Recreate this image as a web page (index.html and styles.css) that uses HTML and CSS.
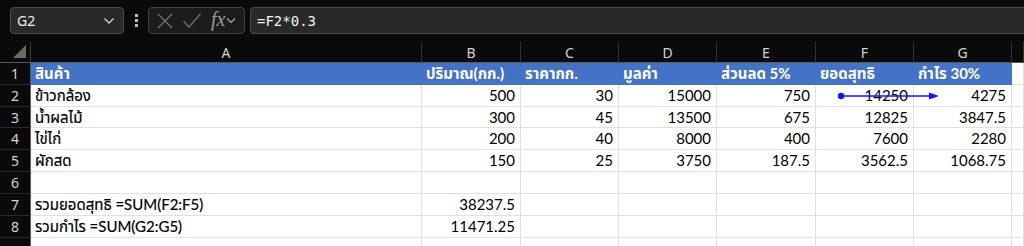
FILE: index.html
```html
<!DOCTYPE html>
<html lang="th">
<head>
<meta charset="utf-8">
<title>Sheet</title>
<link rel="stylesheet" href="styles.css">
</head>
<body>
<div class="toolbar">
  <div class="namebox">
    <span class="name">G2</span>
    <svg class="chev" width="12" height="8" viewBox="0 0 12 8"><polyline points="1.5,1.5 6,6 10.5,1.5" fill="none" stroke="#cfcfcf" stroke-width="1.4"/></svg>
  </div>
  <div class="dots"><i></i><i></i><i></i></div>
  <div class="btns">
    <svg class="ic" width="18" height="18" viewBox="0 0 18 18"><line x1="2" y1="2" x2="16" y2="16" stroke="#6e6e6e" stroke-width="1.4"/><line x1="16" y1="2" x2="2" y2="16" stroke="#6e6e6e" stroke-width="1.4"/></svg>
    <svg class="ic" width="20" height="18" viewBox="0 0 20 18"><polyline points="1.5,9 7,15 18.5,2" fill="none" stroke="#6e6e6e" stroke-width="1.4"/></svg>
    <span class="fx">fx</span>
    <svg class="chev2" width="10" height="7" viewBox="0 0 10 7"><polyline points="1,1.5 5,5.5 9,1.5" fill="none" stroke="#a8a8a8" stroke-width="1.2"/></svg>
  </div>
  <div class="formula">=F2*0.3</div>
</div>

<div class="sheet">
  <div class="corner"><span class="tri"></span></div>
  <div class="ch">A</div><div class="ch">B</div><div class="ch">C</div><div class="ch">D</div><div class="ch">E</div><div class="ch">F</div><div class="ch">G</div><div class="ch last"></div>

  <div class="rh">1</div>
  <div class="c hd">สินค้า</div><div class="c hd">ปริมาณ(กก.)</div><div class="c hd">ราคากก.</div><div class="c hd">มูลค่า</div><div class="c hd">ส่วนลด 5%</div><div class="c hd">ยอดสุทธิ</div><div class="c hd">กำไร 30%</div><div class="c"></div>

  <div class="rh">2</div>
  <div class="c">ข้าวกล้อง</div><div class="c n">500</div><div class="c n">30</div><div class="c n">15000</div><div class="c n">750</div><div class="c n">14250</div><div class="c n">4275</div><div class="c"></div>

  <div class="rh">3</div>
  <div class="c">น้ำผลไม้</div><div class="c n">300</div><div class="c n">45</div><div class="c n">13500</div><div class="c n">675</div><div class="c n">12825</div><div class="c n">3847.5</div><div class="c"></div>

  <div class="rh">4</div>
  <div class="c">ไข่ไก่</div><div class="c n">200</div><div class="c n">40</div><div class="c n">8000</div><div class="c n">400</div><div class="c n">7600</div><div class="c n">2280</div><div class="c"></div>

  <div class="rh">5</div>
  <div class="c">ผักสด</div><div class="c n">150</div><div class="c n">25</div><div class="c n">3750</div><div class="c n">187.5</div><div class="c n">3562.5</div><div class="c n">1068.75</div><div class="c"></div>

  <div class="rh">6</div>
  <div class="c"></div><div class="c"></div><div class="c"></div><div class="c"></div><div class="c"></div><div class="c"></div><div class="c"></div><div class="c"></div>

  <div class="rh">7</div>
  <div class="c">รวมยอดสุทธิ =SUM(F2:F5)</div><div class="c n">38237.5</div><div class="c"></div><div class="c"></div><div class="c"></div><div class="c"></div><div class="c"></div><div class="c"></div>

  <div class="rh">8</div>
  <div class="c">รวมกำไร =SUM(G2:G5)</div><div class="c n">11471.25</div><div class="c"></div><div class="c"></div><div class="c"></div><div class="c"></div><div class="c"></div><div class="c"></div>

  <div class="rh"></div>
  <div class="c"></div><div class="c"></div><div class="c"></div><div class="c"></div><div class="c"></div><div class="c"></div><div class="c"></div><div class="c"></div>

  <svg class="trace" width="110" height="12" viewBox="0 0 110 12">
    <circle cx="4" cy="6" r="3.2" fill="#1414ff"/>
    <line x1="4" y1="6" x2="96" y2="6" stroke="#1414ff" stroke-width="1.3"/>
    <polygon points="92,2.5 102,6 92,9.5" fill="#1414ff"/>
  </svg>
</div>
</body>
</html>
```
FILE: styles.css
```css
* { box-sizing: border-box; }
html, body {
  margin: 0;
  padding: 0;
  background: #0a0a0a;
  width: 1024px;
  height: 246px;
  overflow: hidden;
}
body {
  font-family: Lato, "Noto Sans", "Noto Sans Thai", sans-serif;
}
.toolbar {
  display: flex;
  align-items: center;
  height: 42px;
  padding: 7px 0 8px 10px;
}
.namebox {
  width: 114px;
  height: 27px;
  background: #292929;
  border: 1px solid #4c4c4c;
  border-radius: 4px;
  display: flex;
  align-items: center;
  justify-content: space-between;
  padding: 0 8px 0 6px;
}
.name {
  color: #f0f0f0;
  font-family: "Noto Sans", sans-serif;
  font-size: 14px;
}
.chev { display: block; }
.dots {
  width: 24px;
  display: flex;
  flex-direction: column;
  align-items: center;
  gap: 2px;
}
.dots i {
  display: block;
  width: 3px;
  height: 3px;
  background: #bdbdbd;
}
.btns {
  width: 97px;
  height: 27px;
  border: 1px solid #3f3f3f;
  border-radius: 4px;
  background: #1c1c1c;
  display: flex;
  align-items: center;
  padding: 0 3px 0 7px;
  gap: 8px;
}
.ic { display: block; flex: none; }
.fx {
  font-family: "Liberation Serif", serif;
  font-style: italic;
  font-size: 20px;
  color: #9a9a9a;
  margin-left: 1px;
  line-height: 1;
  margin-top: -3px;
}
.chev2 { display: block; margin-left: -7px; }
.formula {
  flex: 1;
  margin-left: 5px;
  height: 27px;
  background: #292929;
  border: 1px solid #4a4a4a;
  border-right: none;
  border-radius: 4px 0 0 4px;
  color: #f2f2f2;
  font-family: "DejaVu Sans Mono", "Liberation Mono", monospace;
  font-size: 14px;
  display: flex;
  align-items: center;
  padding-left: 6px;
}

.sheet {
  position: relative;
  display: grid;
  grid-template-columns: 31px 391px 99px 98px 98px 99px 98px 98px 1fr;
  grid-template-rows: 21px 22px 22px 21px 22px 22px 22px 22px 22px 22px;
  font-size: 15px;
  color: #000;
}
.corner {
  background: #0a0a0a;
  border-right: 1px solid #3a3a3a;
  border-bottom: 1px solid #5a5a5a;
  position: relative;
}
.tri {
  position: absolute;
  right: 4px;
  bottom: 4px;
  width: 0;
  height: 0;
  border-left: 13px solid transparent;
  border-bottom: 13px solid #6a6a6a;
}
.ch {
  background: #0a0a0a;
  color: #d4d4d4;
  border-right: 1px solid #333;
  border-bottom: 1px solid #5a5a5a;
  display: flex;
  align-items: center;
  justify-content: center;
  font-family: "Noto Sans", sans-serif;
  font-size: 14px;
}
.rh {
  background: #0a0a0a;
  color: #d4d4d4;
  border-right: 1px solid #5a5a5a;
  border-bottom: 1px solid #2a2a2a;
  display: flex;
  align-items: center;
  justify-content: center;
  font-family: "Noto Sans", sans-serif;
  font-size: 14px;
}
.c {
  background: #fff;
  border-right: 1px solid #e1e1e1;
  border-bottom: 1px solid #e1e1e1;
  display: flex;
  align-items: center;
  padding: 0 4px;
  white-space: nowrap;
  overflow: visible;
  line-height: 1;
  -webkit-text-stroke: 0.2px #000;
}
.n { justify-content: flex-end; padding-right: 5px; -webkit-text-stroke: 0; }
.hd {
  background: #4472c4;
  border-right-color: #4472c4;
  border-bottom-color: #4472c4;
  color: #fff;
  font-weight: bold;
  -webkit-text-stroke: 0;
}
.trace {
  position: absolute;
  left: 837px;
  top: 48px;
}
```
